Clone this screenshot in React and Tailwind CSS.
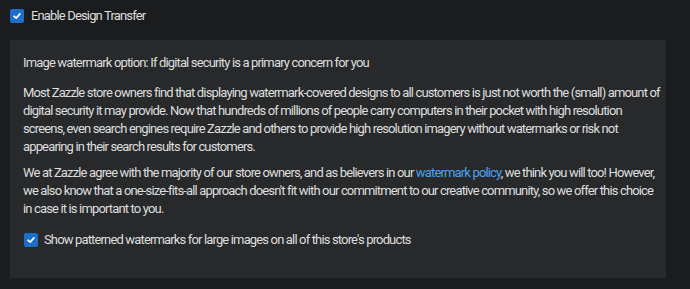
import React from 'react';

const Check = () => (
  <span className="flex h-[14px] w-[14px] shrink-0 items-center justify-center rounded-[2px] bg-[#1c6fc9]">
    <svg viewBox="0 0 12 12" className="h-[10px] w-[10px]" fill="none" stroke="#fff" strokeWidth="2" strokeLinecap="round" strokeLinejoin="round">
      <path d="M2.5 6.3 5 8.5 9.5 3.5" />
    </svg>
  </span>
);

export default function App() {
  return (
    <div className="h-[289px] w-[690px] bg-[#1b1c1e] text-[13px] leading-[18px] tracking-[-0.85px] text-[#dedede]" style={{ fontFamily: 'Roboto, "Liberation Sans", sans-serif' }}>
      <label className="flex h-[30px] items-center gap-[7px] pl-[10px] pt-[1px]">
        <Check />
        <span>Enable Design Transfer</span>
      </label>
      <div className="ml-[10px] mt-[10px] w-[656px] bg-[#27292b] pb-[29px] pl-[13px] pr-[3px] pt-[14px]">
        <p>Image watermark option: If digital security is a primary concern for you</p>
        <p className="mt-[12px]">
          Most Zazzle store owners find that displaying watermark-covered designs to all customers is just not worth the (small) amount of digital security it may provide. Now that hundreds of millions of people carry computers in their pocket with high resolution screens, even search engines require Zazzle and others to provide high resolution imagery without watermarks or risk not appearing in their search results for customers.
        </p>
        <p className="mt-[8px]">
          We at Zazzle agree with the majority of our store owners, and as believers in our{' '}
          <a className="text-[#4ba3f2]">watermark policy</a>, we think you will too! However, we also know that a one-size-fits-all approach doesn't fit with our commitment to our creative community, so we offer this choice in case it is important to you.
        </p>
        <label className="mt-[13px] flex items-center gap-[6px] pl-[1px]">
          <Check />
          <span>Show patterned watermarks for large images on all of this store's products</span>
        </label>
      </div>
    </div>
  );
}
